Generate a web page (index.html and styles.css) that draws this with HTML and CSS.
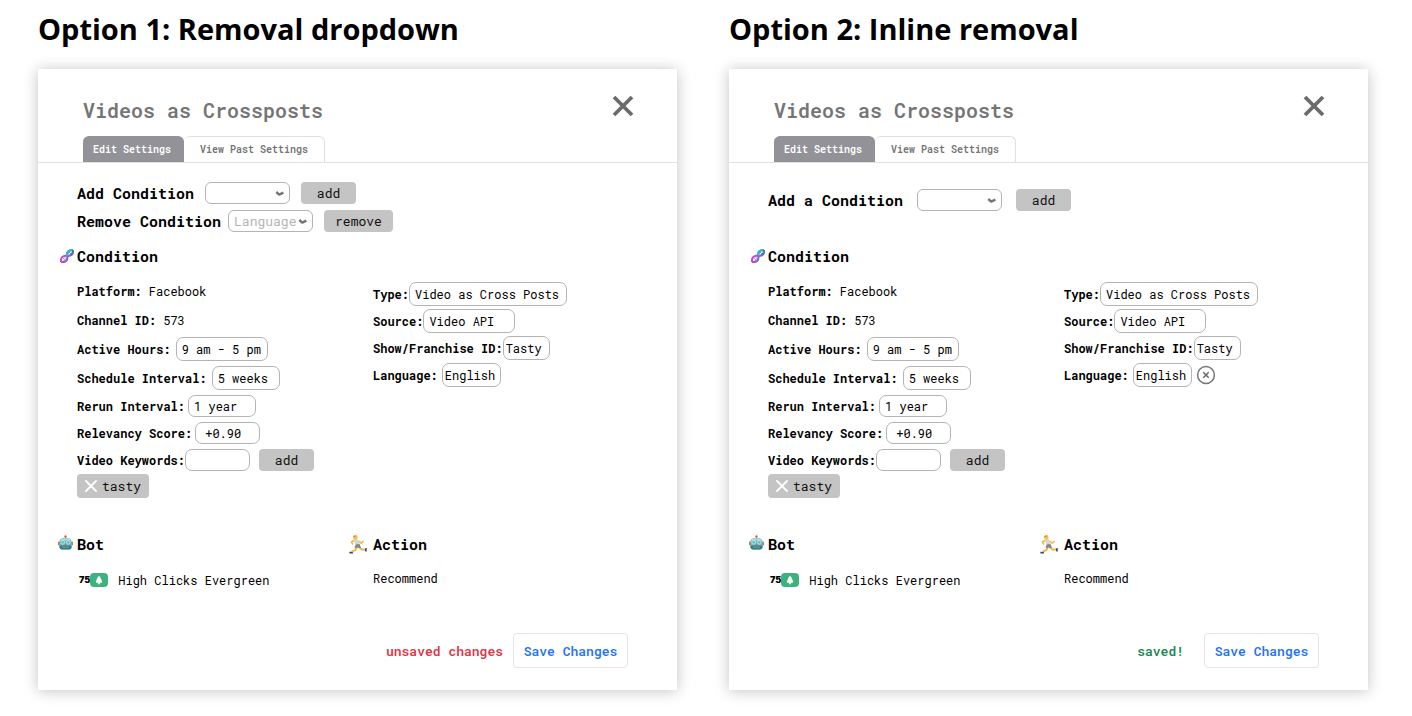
FILE: index.html
```html
<!DOCTYPE html>
<html lang="en">
<head>
<meta charset="utf-8">
<title>Videos as Crossposts</title>
<link rel="stylesheet" href="styles.css">
</head>
<body>
<svg class="sprite" aria-hidden="true">
  <symbol id="close" viewBox="0 0 22 22"><path d="M2 2 20 20M20 2 2 20" fill="none" stroke="currentColor" stroke-width="3.8"/></symbol>
  <symbol id="chevron" viewBox="0 0 10 7"><path d="M1.300 2 4.200 4.600 8.400 2.600" fill="none" stroke="#757575" stroke-width="2.400" stroke-linejoin="round"/></symbol>
  <symbol id="thin-x" viewBox="0 0 12 12"><path d="M1 1 11 11M11 1 1 11" fill="none" stroke="#fff" stroke-width="1.8" stroke-linecap="round"/></symbol>
  <symbol id="remove" viewBox="0 0 20 20"><circle cx="10" cy="10" r="8.4" fill="none" stroke="#757575" stroke-width="1.5"/><path d="M7.3 7.3 12.7 12.7M12.7 7.3 7.3 12.7" stroke="#6b6b6b" stroke-width="1.6"/></symbol>
  <symbol id="dna" viewBox="0 0 14 14">
    <path d="M2.500 8.500 5.500 11.500M4 7.500 6.500 10M7.500 4 10 6.500M8.500 2.500 11.500 5.500" stroke="#7d8fd0" stroke-width=".9"/>
    <path d="M1 13C6 13.500 8 11 7.300 7 6.500 3 8.500 1 13 1" fill="none" stroke="#3f7fc0" stroke-width="2"/>
    <path d="M1 13C.5 8.500 3 6 7 6.800 11 7.500 13.500 5.500 13 1" fill="none" stroke="#c445d8" stroke-width="2"/>
    <path d="M7.300 7C6.500 3 8.500 1 13 1" fill="none" stroke="#35b3cc" stroke-width="2"/>
    <path d="M1 13C4 13.200 5.800 12.300 6.600 11" fill="none" stroke="#c445d8" stroke-width="2"/>
    <path d="M10.500 6.200Q13.200 4.800 13 1" fill="none" stroke="#3a7f9c" stroke-width="2"/>
  </symbol>
  <symbol id="robot" viewBox="0 0 15 15">
    <path d="M7 1.500h1v3H7z" fill="#8da5a8"/><circle cx="7.500" cy="1.500" r="1.200" fill="#d9633b"/>
    <rect x="0" y="6.500" width="2" height="4" rx=".8" fill="#d0704f"/><rect x="13" y="6.500" width="2" height="4" rx=".8" fill="#d0704f"/>
    <path d="M1.500 6Q2 3 7.500 2.800 13 3 13.500 6V12.500Q13 14.500 11 14.500H4Q2 14.500 1.500 12.500Z" fill="#6fb3b9"/>
    <path d="M2 5.500Q3 3.300 7.500 3.200 12 3.300 13 5.500Z" fill="#b9d9d8"/>
    <path d="M1.500 10.500h12v2Q13 14.500 11 14.500H4Q2 14.500 1.500 12.500Z" fill="#357c86"/>
    <circle cx="4.700" cy="7.300" r="1.900" fill="#47cbd7" stroke="#dbeff0" stroke-width=".7"/><circle cx="10.300" cy="7.300" r="1.900" fill="#47cbd7" stroke="#dbeff0" stroke-width=".7"/>
    <path d="M7.500 8 8.500 10h-2z" fill="#d9633b"/><path d="M4 12.200h7" stroke="#6fa5aa" stroke-width="1"/>
  </symbol>
  <symbol id="runner" viewBox="0 0 18 19">
    <path d="M8.500 11.500 6.200 15.200 2 17" fill="none" stroke="#f0b545" stroke-width="1.900"/>
    <path d="M9.500 11.500 12.500 14.500 16.500 14.500" fill="none" stroke="#f0b545" stroke-width="1.900"/>
    <path d="M5 5.500 2.500 7 4 9.500M10 6 12.200 8.300 14.500 6" fill="none" stroke="#efb33e" stroke-width="1.500"/>
    <path d="M4.500 4.500 8.500 4.200 10.800 7 10.300 11 6.800 11Z" fill="#d5d5d2"/>
    <path d="M6.800 9.500 10.500 9 12 13 9.500 13 8.500 12 7 13.500 5.500 12Z" fill="#85858a"/>
    <circle cx="6.400" cy="2.500" r="2.200" fill="#f3c14b"/><path d="M3.800 2.400Q4.500-.3 7.500.4L7 1.500Z" fill="#d99622"/>
    <path d="M.3 16.800 4 17.200V18.500H.5ZM16 13.500 17.800 13 17.500 17 16 16Z" fill="#36406f"/>
  </symbol>
  <symbol id="tree" viewBox="0 0 18 14"><path d="M9 3Q10.600 3.500 10.800 5.500L12.200 8.500 11.800 9.800H9.800V11.300H8.200V9.800H6.200L5.800 8.500 7.200 5.500Q7.400 3.500 9 3Z" fill="#fff"/></symbol>
</svg>

<main class="options">
  <section class="option">
    <h1 class="option-title">Option 1: Removal dropdown</h1>
    <form class="card">
      <header class="card-head">
        <div class="title-row">
          <h2 class="card-title">Videos as Crossposts</h2>
          <button class="close" type="button" aria-label="Close"><svg><use href="#close"/></svg></button>
        </div>
        <nav class="tabs">
          <button class="tab tab-active" type="button">Edit Settings</button>
          <button class="tab" type="button">View Past Settings</button>
        </nav>
      </header>
      <div class="card-body">
        <div class="pickers">
          <div class="picker">
            <label for="add1">Add Condition</label>
            <span class="select"><select id="add1"><option></option></select><svg><use href="#chevron"/></svg></span>
            <button class="btn" type="button">add</button>
          </div>
          <div class="picker picker-tight">
            <label for="rem1">Remove Condition</label>
            <span class="select"><select id="rem1"><option>Language</option></select><svg><use href="#chevron"/></svg></span>
            <button class="btn" type="button">remove</button>
          </div>
        </div>
        <h3 class="heading heading-dna"><svg><use href="#dna"/></svg>Condition</h3>
        <div class="columns">
          <div>
            <div class="fields">
              <div class="field"><b>Platform:</b><span>Facebook</span></div>
              <div class="field"><b>Channel ID:</b><span>573</span></div>
              <div class="field"><label for="hours1">Active Hours:</label><input class="w-l tall" id="hours1" value="9 am - 5 pm"></div>
              <div class="field"><label for="sched1">Schedule Interval:</label><input class="w-m tall" id="sched1" value="5 weeks"></div>
              <div class="field field-short"><label for="rerun1">Rerun Interval:</label><input class="w-m" id="rerun1" value="1 year"></div>
              <div class="field field-short"><label for="score1">Relevancy Score:</label><input class="w-s indent" id="score1" value="+0.90"></div>
              <div class="field field-short field-flush"><label for="key1">Video Keywords:</label><input class="w-s" id="key1"><button class="btn" type="button">add</button></div>
            </div>
            <button class="tag" type="button"><svg><use href="#thin-x"/></svg>tasty</button>
          </div>
          <div class="fields fields-dense">
            <div class="field"><label for="type1">Type:</label><input class="w-xl" id="type1" value="Video as Cross Posts"></div>
            <div class="field"><label for="src1">Source:</label><input class="w-l" id="src1" value="Video API"></div>
            <div class="field"><label for="show1">Show/Franchise ID:</label><input class="w-xs snug" id="show1" value="Tasty"></div>
            <div class="field field-gap"><label for="lang1">Language:</label><input class="w-s snug" id="lang1" value="English"></div>
          </div>
        </div>
        <div class="columns summary">
          <div>
            <h3 class="heading heading-bot"><svg><use href="#robot"/></svg>Bot</h3>
            <p class="bot"><span class="score">75</span><svg class="badge"><use href="#tree"/></svg><span>High Clicks Evergreen</span></p>
          </div>
          <div>
            <h3 class="heading heading-action"><svg><use href="#runner"/></svg>Action</h3>
            <p class="action">Recommend</p>
          </div>
        </div>
        <footer class="card-foot">
          <span class="status status-unsaved">unsaved changes</span>
          <button class="save" type="submit">Save Changes</button>
        </footer>
      </div>
    </form>
  </section>

  <section class="option">
    <h1 class="option-title">Option 2: Inline removal</h1>
    <form class="card">
      <header class="card-head">
        <div class="title-row">
          <h2 class="card-title">Videos as Crossposts</h2>
          <button class="close" type="button" aria-label="Close"><svg><use href="#close"/></svg></button>
        </div>
        <nav class="tabs">
          <button class="tab tab-active" type="button">Edit Settings</button>
          <button class="tab" type="button">View Past Settings</button>
        </nav>
      </header>
      <div class="card-body">
        <div class="pickers pickers-single">
          <div class="picker picker-wide">
            <label for="add2">Add a Condition</label>
            <span class="select"><select id="add2"><option></option></select><svg><use href="#chevron"/></svg></span>
            <button class="btn" type="button">add</button>
          </div>
        </div>
        <h3 class="heading heading-dna"><svg><use href="#dna"/></svg>Condition</h3>
        <div class="columns">
          <div>
            <div class="fields">
              <div class="field"><b>Platform:</b><span>Facebook</span></div>
              <div class="field"><b>Channel ID:</b><span>573</span></div>
              <div class="field"><label for="hours2">Active Hours:</label><input class="w-l tall" id="hours2" value="9 am - 5 pm"></div>
              <div class="field"><label for="sched2">Schedule Interval:</label><input class="w-m tall" id="sched2" value="5 weeks"></div>
              <div class="field field-short"><label for="rerun2">Rerun Interval:</label><input class="w-m" id="rerun2" value="1 year"></div>
              <div class="field field-short"><label for="score2">Relevancy Score:</label><input class="w-s indent" id="score2" value="+0.90"></div>
              <div class="field field-short field-flush"><label for="key2">Video Keywords:</label><input class="w-s" id="key2"><button class="btn" type="button">add</button></div>
            </div>
            <button class="tag" type="button"><svg><use href="#thin-x"/></svg>tasty</button>
          </div>
          <div class="fields fields-dense">
            <div class="field"><label for="type2">Type:</label><input class="w-xl" id="type2" value="Video as Cross Posts"></div>
            <div class="field"><label for="src2">Source:</label><input class="w-l" id="src2" value="Video API"></div>
            <div class="field"><label for="show2">Show/Franchise ID:</label><input class="w-xs snug" id="show2" value="Tasty"></div>
            <div class="field field-gap"><label for="lang2">Language:</label><input class="w-s snug" id="lang2" value="English"><button class="remove" type="button" aria-label="Remove Language"><svg><use href="#remove"/></svg></button></div>
          </div>
        </div>
        <div class="columns summary">
          <div>
            <h3 class="heading heading-bot"><svg><use href="#robot"/></svg>Bot</h3>
            <p class="bot"><span class="score">75</span><svg class="badge"><use href="#tree"/></svg><span>High Clicks Evergreen</span></p>
          </div>
          <div>
            <h3 class="heading heading-action"><svg><use href="#runner"/></svg>Action</h3>
            <p class="action">Recommend</p>
          </div>
        </div>
        <footer class="card-foot">
          <span class="status status-saved">saved!</span>
          <button class="save" type="submit">Save Changes</button>
        </footer>
      </div>
    </form>
  </section>
</main>
</body>
</html>
```
FILE: styles.css
```css
* { box-sizing: border-box; }
body, h1, h2, h3, p { margin: 0; }
body {
  background: #fff;
  color: #000;
  font: 12px/16px "Roboto Mono", "DejaVu Sans Mono", monospace;
}
button, input, select { margin: 0; font: inherit; color: inherit; }
button { border: 0; padding: 0; background: none; white-space: nowrap; }
svg { display: block; flex: none; }
.sprite { display: none; }

.options {
  display: grid;
  grid-template-columns: 1fr 1fr;
  gap: 52px;
  padding: 9px 44px 26px 38px;
}
.option-title {
  margin-bottom: 20px;
  font: 700 29px/40px "Open Sans", sans-serif;
  white-space: nowrap;
}
.card { background: #fff; box-shadow: 0 1px 14px rgba(0, 0, 0, .24); }

.card-head { padding: 25px 43px 0 45px; border-bottom: 1px solid #e2e2e2; }
.title-row { display: flex; justify-content: space-between; align-items: flex-start; height: 42px; }
.card-title { color: #757575; font-size: 20px; line-height: 32px; font-weight: 600; }
.close { margin-top: 1px; color: #6b6b6b; }
.close svg { width: 22px; height: 22px; }
.tabs { display: flex; }
.tab {
  height: 26px;
  padding: 0 16px;
  border: 1px solid #e0e0e0;
  border-width: 1px 1px 0 0;
  border-radius: 6px 6px 0 0;
  color: #757575;
  font-size: 10px;
  font-weight: 600;
}
.tab-active { padding: 0 12px 0 10px; border-color: #929298; background: #929298; color: #fff; }

.card-body { padding: 19px 0 22px 39px; }
.pickers { display: grid; align-content: start; gap: 6px; min-height: 50px; }
.pickers-single { padding-top: 7px; }
.picker { display: flex; align-items: center; gap: 11px; font-size: 15px; font-weight: 700; line-height: 20px; }
.picker-tight label { margin-right: -4px; }
.picker-wide { gap: 14px; }
.select { position: relative; width: 85px; height: 22px; }
.select select {
  appearance: none;
  width: 100%;
  height: 100%;
  padding: 0 5px;
  border: 1px solid #b4b4b4;
  border-radius: 6px;
  background: #fff;
  color: #b4b4b4;
  font-size: 13px;
  font-weight: 400;
}
.select svg { position: absolute; right: 5px; top: 8px; width: 10px; height: 7px; }
.btn {
  height: 22px;
  padding: 0 11px;
  min-width: 55px;
  border-radius: 4px;
  background: #c4c4c4;
  color: #111;
  font-size: 13px;
  font-weight: 400;
}

.heading { display: flex; align-items: center; font-size: 15px; line-height: 20px; font-weight: 700; }
.heading-dna { margin: 14px 0 13px -17px; gap: 3px; }
.heading-dna svg { width: 14px; height: 14px; }
.heading-bot { margin-left: -19px; gap: 4px; }
.heading-bot svg { width: 15px; height: 15px; margin-bottom: 4px; }
.heading-action { margin-left: -24px; gap: 6px; }
.heading-action svg { width: 18px; height: 19px; }

.columns { display: grid; grid-template-columns: 37fr 38fr; }
.fields { display: grid; gap: 5px; }
.fields-dense { align-content: start; gap: 3px; padding-top: 3px; }
.field { display: flex; align-items: center; gap: 5px; height: 24px; white-space: nowrap; }
.field-short { height: 22px; gap: 3px; }
.fields-dense .field, .field-flush { gap: 0; }
.fields-dense .field-gap { gap: 4px; }
.field b, .field label { font-weight: 700; }
.field b + span { margin-left: 2px; }
.field input {
  height: 22px;
  padding: 0 5px;
  border: 1px solid #b4b4b4;
  border-radius: 7px;
  background: #fff;
}
.field input.tall, .fields-dense input { height: 24px; }
.field input.snug { padding: 0 2px; }
.field input.indent { padding-left: 9px; }
.w-xs { width: 47px; }
.w-s { width: 65px; }
.w-s.snug { width: 59px; }
.w-m { width: 68px; }
.w-l { width: 92px; }
.w-xl { width: 158px; }
.field .btn { margin-left: 9px; }
.remove svg { width: 20px; height: 20px; }
.tag {
  display: flex;
  align-items: center;
  gap: 5px;
  height: 24px;
  margin-top: 3px;
  padding: 0 8px;
  border-radius: 4px;
  background: #c4c4c4;
  color: #111;
  font-size: 13px;
}
.tag svg { width: 12px; height: 12px; }

.summary { margin-top: 36px; }
.bot { display: flex; align-items: center; margin: 18px 0 0 2px; }
.score { font: 900 9px/14px Inter, sans-serif; }
.badge { width: 18px; height: 14px; margin-right: 10px; border-radius: 4px; background: #3cb37f; }
.action { margin-top: 16px; }

.card-foot { display: flex; justify-content: flex-end; align-items: center; gap: 10px; margin-top: 45px; padding-right: 49px; }
.status { font-size: 13px; font-weight: 600; }
.status-unsaved { color: #dc3545; }
.status-saved { margin-right: 10px; color: #198754; }
.save {
  height: 35px;
  width: 115px;
  border: 1px solid #e6e6e6;
  border-radius: 4px;
  color: #1f75f5;
  font-size: 13px;
  font-weight: 600;
}
```
